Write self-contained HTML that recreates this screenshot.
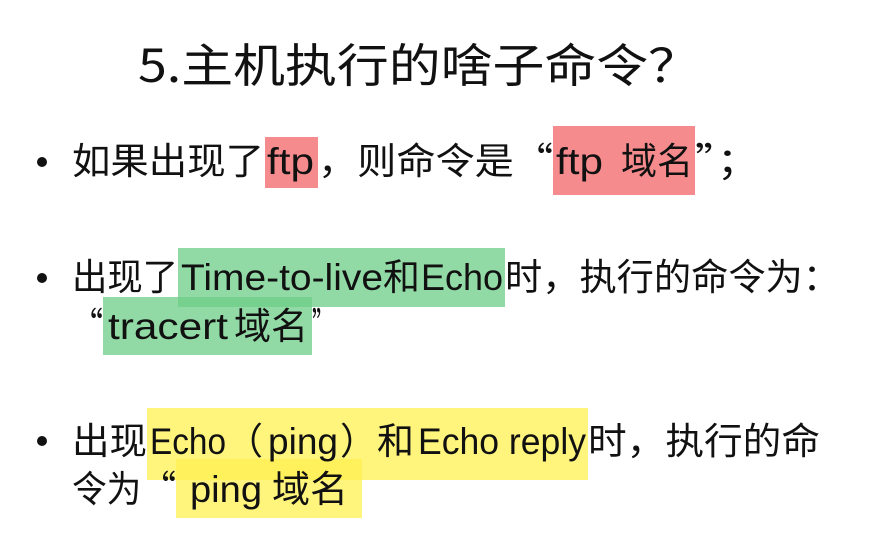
<!DOCTYPE html>
<html><head><meta charset="utf-8"><style>
body{margin:0;width:869px;height:558px;background:#fff;overflow:hidden}
svg{position:absolute;left:0;top:0}
text{font-family:"Liberation Sans","Noto Sans CJK SC",sans-serif;fill:#111}
.c{font-family:"Noto Sans CJK SC",sans-serif;font-size:37px}
.l{font-size:37px}
</style></head><body>
<svg width="869" height="558" viewBox="0 0 869 558">
<rect x="265" y="137" width="53" height="51" fill="#f58b8d"/>
<rect x="553" y="126" width="142" height="69" fill="#f58b8d"/>
<rect x="178" y="248" width="327" height="59" fill="#6ecd87" fill-opacity="0.75"/>
<rect x="103" y="297" width="209" height="58" fill="#6ecd87" fill-opacity="0.75"/>
<rect x="147" y="408" width="441" height="72" fill="#fff050" fill-opacity="0.75"/>
<rect x="176" y="459" width="186" height="59" fill="#fff050" fill-opacity="0.75"/>

<text x="138" y="82" class="c" style="font-size:46px" textLength="562" lengthAdjust="spacingAndGlyphs">5.主机执行的啥子命令？</text>

<circle cx="42" cy="162" r="5" fill="#111"/>
<text x="72" y="174" class="c" textLength="192" lengthAdjust="spacingAndGlyphs">如果出现了</text>
<text x="267" y="174" class="l" textLength="47" lengthAdjust="spacingAndGlyphs">ftp</text>
<text x="318" y="174" class="c" textLength="235" lengthAdjust="spacingAndGlyphs">，则命令是“</text>
<text x="556" y="174" class="l" textLength="47" lengthAdjust="spacingAndGlyphs">ftp</text>
<text x="621" y="174" class="c" textLength="72" lengthAdjust="spacingAndGlyphs">域名</text>
<text x="695" y="174" class="c" textLength="65" lengthAdjust="spacingAndGlyphs">”；</text>

<circle cx="42" cy="278" r="5" fill="#111"/>
<text x="72" y="290" class="c" textLength="106" lengthAdjust="spacingAndGlyphs">出现了</text>
<text x="181" y="290" class="l" textLength="202" lengthAdjust="spacingAndGlyphs">Time-to-live</text>
<text x="383" y="290" class="c" textLength="37" lengthAdjust="spacingAndGlyphs">和</text>
<text x="421" y="290" class="l" textLength="82" lengthAdjust="spacingAndGlyphs">Echo</text>
<text x="505" y="290" class="c" textLength="335" lengthAdjust="spacingAndGlyphs">时，执行的命令为：</text>
<text x="72" y="339" class="c" textLength="31" lengthAdjust="spacingAndGlyphs">“</text>
<text x="108" y="339" class="l" textLength="120" lengthAdjust="spacingAndGlyphs">tracert</text>
<text x="234" y="339" class="c" textLength="74" lengthAdjust="spacingAndGlyphs">域名</text>
<text x="312" y="339" class="c" textLength="22" lengthAdjust="spacingAndGlyphs">”</text>

<circle cx="42" cy="441" r="5" fill="#111"/>
<text x="72" y="454" class="c" textLength="75" lengthAdjust="spacingAndGlyphs">出现</text>
<text x="150" y="454" class="l" textLength="76" lengthAdjust="spacingAndGlyphs">Echo</text>
<text x="226" y="454" class="c" textLength="37" lengthAdjust="spacingAndGlyphs">（</text>
<text x="268" y="454" class="l" textLength="70" lengthAdjust="spacingAndGlyphs">ping</text>
<text x="340" y="454" class="c" textLength="74" lengthAdjust="spacingAndGlyphs">）和</text>
<text x="418" y="454" class="l" textLength="168" lengthAdjust="spacingAndGlyphs">Echo reply</text>
<text x="588" y="454" class="c" textLength="232" lengthAdjust="spacingAndGlyphs">时，执行的命</text>
<text x="72" y="502" class="c" textLength="104" lengthAdjust="spacingAndGlyphs">令为“</text>
<text x="190" y="502" class="l" textLength="72" lengthAdjust="spacingAndGlyphs">ping</text>
<text x="272" y="502" class="c" textLength="76" lengthAdjust="spacingAndGlyphs">域名</text>
</svg>
</body></html>
